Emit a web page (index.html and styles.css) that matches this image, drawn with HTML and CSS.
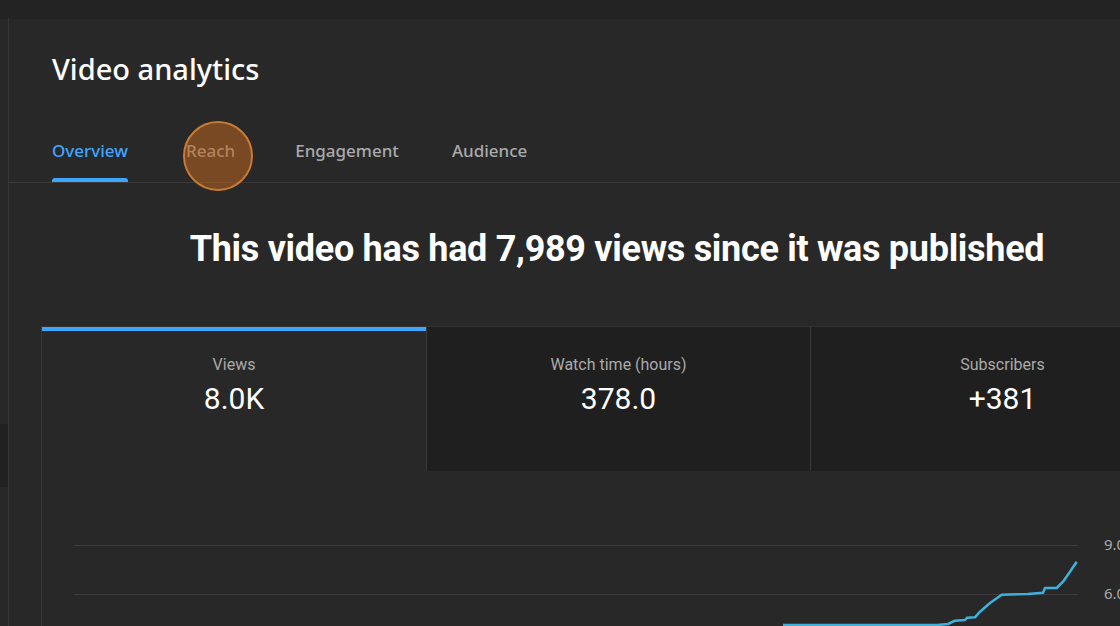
FILE: index.html
```html
<!DOCTYPE html>
<html lang="en">
<head>
<meta charset="utf-8">
<title>Video analytics</title>
<link rel="stylesheet" href="styles.css">
</head>
<body>
<div class="topbar"></div>
<div class="shell">
  <div class="rail"><div class="rail-patch"></div></div>
  <main class="main">
    <header class="header">
      <h1 class="title">Video analytics</h1>
      <nav class="tabs">
        <a class="tab active">Overview</a>
        <a class="tab reach">Reach<span class="click-ring"></span></a>
        <a class="tab engagement">Engagement</a>
        <a class="tab">Audience</a>
      </nav>
    </header>
    <section class="content">
      <h2 class="headline">This video has had 7,989 views since it was published</h2>
      <div class="panel">
        <div class="cards">
          <div class="card selected">
            <div class="card-label">Views</div>
            <div class="card-value">8.0K</div>
          </div>
          <div class="card">
            <div class="card-label">Watch time (hours)</div>
            <div class="card-value">378.0</div>
          </div>
          <div class="card">
            <div class="card-label">Subscribers</div>
            <div class="card-value">+381</div>
          </div>
        </div>
        <div class="chart">
          <svg class="chart-svg" width="1152" height="160" viewBox="0 0 1152 160">
            <line class="grid" x1="32" y1="74.5" x2="1036" y2="74.5"/>
            <line class="grid" x1="32" y1="123.5" x2="1036" y2="123.5"/>
            <text class="axis" x="1062" y="79">9.0</text>
            <text class="axis" x="1062" y="128">6.0</text>
            <polyline class="series" points="741,154 895,154 906,153 913,149.7 923,149 925,146.7 933,146.3 938,140.7 948,132 959.7,123.7 986,123 1001,121.7 1003,117 1014.7,117 1021,110.7 1028,100.7 1034.7,90.7"/>
          </svg>
        </div>
      </div>
    </section>
  </main>
</div>
</body>
</html>
```
FILE: styles.css
```css
html, body {
  margin: 0;
  padding: 0;
  background: #282828;
  overflow: hidden;
  width: 1120px;
  height: 626px;
}
body {
  font-family: Roboto, "Liberation Sans", sans-serif;
  color: #fff;
}
.topbar {
  height: 17px;
  background: #232323;
  box-shadow: 0 1px 2px rgba(0,0,0,0.25);
  position: relative;
  z-index: 1;
}
.shell {
  display: flex;
  height: 609px;
}
.rail {
  width: 8px;
  flex: 0 0 8px;
  border-right: 1px solid #363636;
  padding-top: 407px;
  box-sizing: content-box;
}
.rail-patch {
  height: 63px;
  background: #212121;
}
.main {
  flex: 1 0 auto;
  width: 1200px;
}
.header {
  border-bottom: 1px solid #3a3a3a;
}
.title {
  margin: 0;
  padding: 34px 0 0 43px;
  font-family: "Noto Sans", "Open Sans", sans-serif;
  font-weight: 500;
  font-size: 29px;
  line-height: 36px;
  color: #fff;
  letter-spacing: 0;
}
.tabs {
  display: flex;
  padding: 15px 0 0 43px;
  margin-top: 37px;
  height: 43px;
}
.tab {
  position: relative;
  font-family: "Noto Sans", "Open Sans", sans-serif;
  font-weight: 500;
  font-size: 17px;
  color: #aaaaaa;
  line-height: 24px;
  margin-right: 60px;
}
.tab.active {
  color: #3ea6ff;
  margin-right: 58px;
}
.tab.engagement {
  margin-right: 53px;
}
.tab.active::after {
  content: "";
  position: absolute;
  left: 0;
  right: 0;
  bottom: 0;
  height: 4px;
  background: #3ea6ff;
  border-radius: 3px 3px 0 0;
}
.click-ring {
  position: absolute;
  left: -3px;
  top: -18px;
  width: 70px;
  height: 70px;
  border-radius: 50%;
  background: rgba(185, 100, 30, 0.55);
  border: 2.5px solid #c97a34;
  box-sizing: border-box;
}
.content {
  width: 1152px;
  margin-left: 32px;
}
.headline {
  margin: 0;
  padding-top: 44px;
  text-align: center;
  font-family: Roboto, "Liberation Sans", sans-serif;
  font-weight: 700;
  font-size: 36px;
  line-height: 44px;
  letter-spacing: -0.3px;
  color: #fff;
  height: 99px;
}
.panel {
  border-left: 1px solid #3a3a3a;
  border-top: 1px solid #333;
}
.cards {
  display: flex;
  height: 144px;
}
.card {
  flex: 0 0 384px;
  box-sizing: border-box;
  background: #1f1f1f;
  border-left: 1px solid #3a3a3a;
  text-align: center;
  padding-top: 28px;
}
.card:first-child {
  border-left: 0;
}
.card.selected {
  background: #282828;
  border-top: 4px solid #3ea6ff;
  padding-top: 24px;
}
.card-label {
  font-size: 16px;
  line-height: 20px;
  color: #aaaaaa;
  font-weight: 400;
}
.card-value {
  margin-top: 6px;
  font-size: 30px;
  line-height: 36px;
  color: #fff;
  font-weight: 400;
}
.chart {
  height: 160px;
}
.chart-svg {
  display: block;
}
.grid {
  stroke: #3c3c3c;
  stroke-width: 1;
}
.axis {
  fill: #aaaaaa;
  font-family: "Noto Sans", "Open Sans", sans-serif;
  font-size: 15px;
}
.series {
  fill: none;
  stroke: #3fb1dd;
  stroke-width: 2.5;
  stroke-linejoin: round;
}
```
